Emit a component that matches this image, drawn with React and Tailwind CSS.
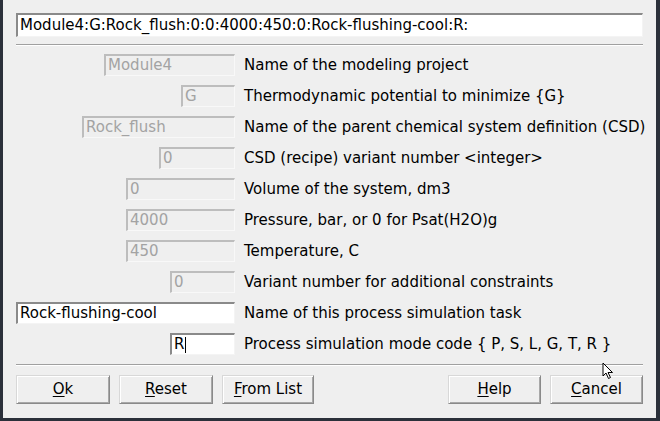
import React from 'react';

const rows = [
  { value: 'Module4', width: 'w-[131px]', label: 'Name of the modeling project' },
  { value: 'G', width: 'w-[54px]', label: 'Thermodynamic potential to minimize {G}' },
  { value: 'Rock_flush', width: 'w-[153px]', label: 'Name of the parent chemical system definition (CSD)' },
  { value: '0', width: 'w-[76px]', label: 'CSD (recipe) variant number <integer>' },
  { value: '0', width: 'w-[109px]', label: 'Volume of the system, dm3' },
  { value: '4000', width: 'w-[109px]', label: 'Pressure, bar, or 0 for Psat(H2O)g' },
  { value: '450', width: 'w-[109px]', label: 'Temperature, C' },
  { value: '0', width: 'w-[65px]', label: 'Variant number for additional constraints' },
  { value: 'Rock-flushing-cool', width: 'w-[219px]', label: 'Name of this process simulation task', enabled: true },
  { value: 'R', width: 'w-[65px]', label: 'Process simulation mode code { P, S, L, G, T, R }', enabled: true, cursor: true },
];

const Button = ({ mnemonic, rest, width }) => (
  <button
    className={`${width} h-[29px] bg-[#efefef] border border-t-[#d8d8d8] border-l-[#d8d8d8] border-b-[#8a8a8a] border-r-[#8a8a8a] shadow-[inset_1px_1px_0_#ffffff,inset_-1px_-1px_0_#a8a8a8] text-[15px] text-black flex items-center justify-center`}
  >
    <span>
      <span className="underline underline-offset-2">{mnemonic}</span>
      {rest}
    </span>
  </button>
);

const Separator = () => (
  <div className="h-[2px] border-t border-[#a0a0a0] border-b border-b-white" />
);

export default function App() {
  return (
    <div
      className="w-[660px] h-[421px] bg-[#2b303a] pl-[3px] pr-[4px] pb-[3px]"
      style={{ fontFamily: '"DejaVu Sans", sans-serif' }}
    >
      <div className="h-full bg-[#efefef] px-[13px] pt-[13px] flex flex-col">
        {/* Summary entry */}
        <div className="h-[24px] bg-white border-t-2 border-l-2 border-t-[#8a8a8a] border-l-[#8a8a8a] border-b border-r border-b-[#f4f4f4] border-r-[#f4f4f4] px-[2px] flex items-center text-[15px] text-black leading-none">
          Module4:G:Rock_flush:0:0:4000:450:0:Rock-flushing-cool:R:
        </div>
        <div className="mt-[7px]">
          <Separator />
        </div>

        {/* Parameter rows */}
        <div className="mt-[8px] flex flex-col gap-[9px]">
          {rows.map((r, i) => (
            <div key={i} className="flex items-center h-[22px]">
              <div className="w-[219px] flex justify-end shrink-0">
                <div
                  className={`${r.width} h-[22px] border-t-2 border-l-2 border-b border-r flex items-center px-[2px] text-[15px] leading-none ${
                    r.enabled
                      ? 'bg-white text-black border-t-[#8a8a8a] border-l-[#8a8a8a] border-b-[#f4f4f4] border-r-[#f4f4f4]'
                      : 'bg-[#efefef] text-[#a3a3a3] border-t-[#bdbdbd] border-l-[#bdbdbd] border-b-[#f8f8f8] border-r-[#f8f8f8]'
                  }`}
                >
                  {r.value}
                  {r.cursor && <span className="inline-block w-px h-[16px] bg-black ml-px" />}
                </div>
              </div>
              <span className="ml-[9px] text-[15px] text-black whitespace-nowrap">{r.label}</span>
            </div>
          ))}
        </div>

        <div className="mt-[9px]">
          <Separator />
        </div>

        {/* Buttons */}
        <div className="mt-[9px] flex items-center relative">
          <Button mnemonic="O" rest="k" width="w-[94px]" />
          <div className="ml-[9px]">
            <Button mnemonic="R" rest="eset" width="w-[94px]" />
          </div>
          <div className="ml-[9px]">
            <Button mnemonic="F" rest="rom List" width="w-[92px]" />
          </div>
          <div className="ml-auto flex gap-[9px]">
            <Button mnemonic="H" rest="elp" width="w-[93px]" />
            <Button mnemonic="C" rest="ancel" width="w-[93px]" />
          </div>
          {/* mouse pointer */}
          <svg
            className="absolute left-[586px] top-[-13px]"
            width="12"
            height="18"
            viewBox="0 0 12 18"
          >
            <path d="M1 1 L1 14 L4 11 L6.5 16.5 L8.5 15.5 L6 10.5 L10.5 10.5 Z" fill="white" stroke="black" strokeWidth="1" />
          </svg>
        </div>
      </div>
    </div>
  );
}
